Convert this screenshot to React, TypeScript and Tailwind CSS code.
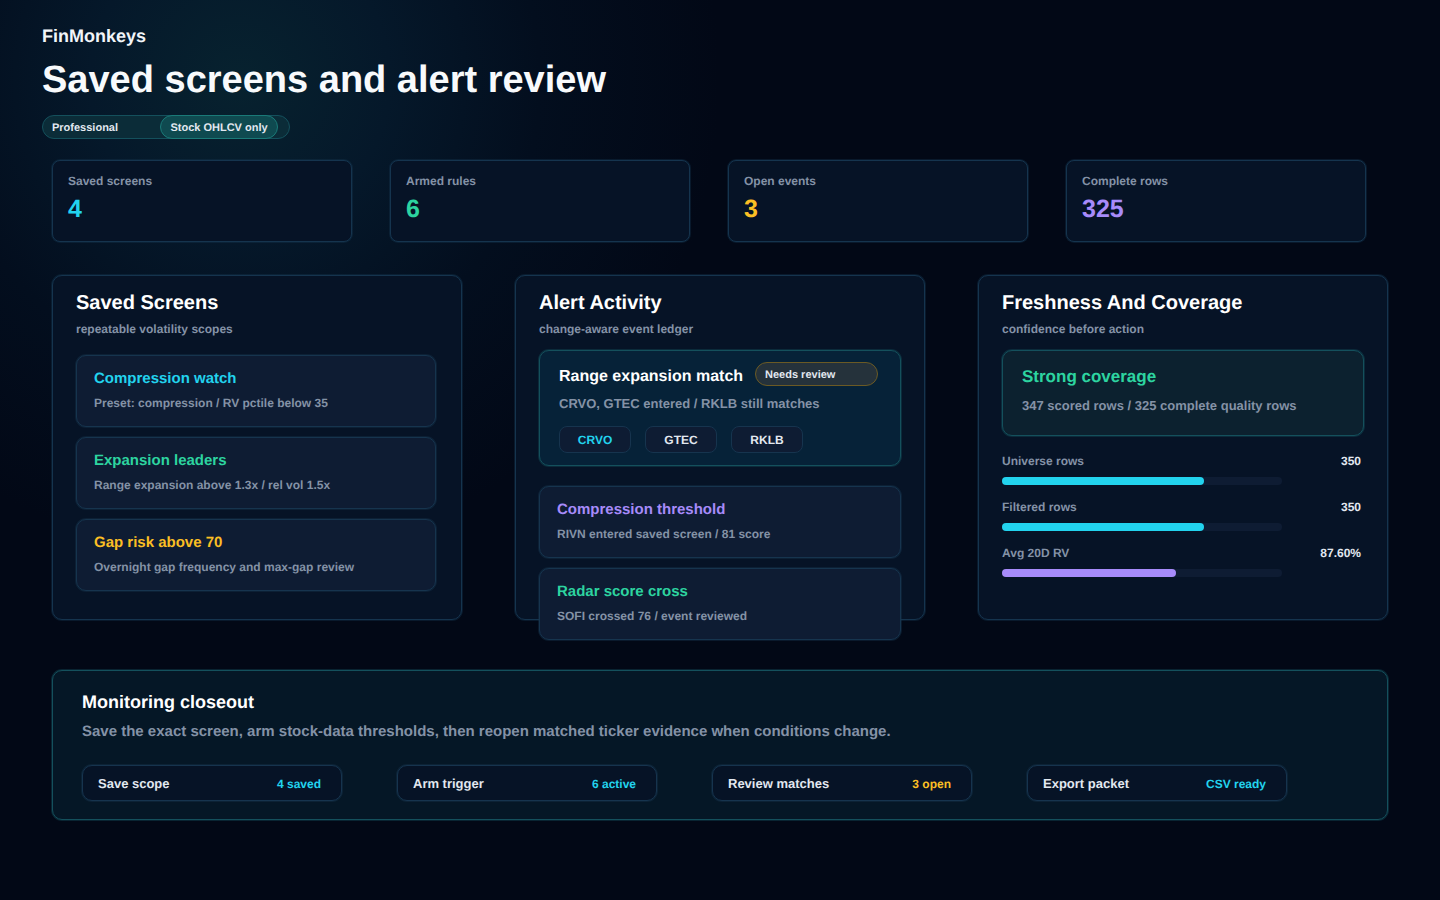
const stats = [
  { label: 'Saved screens', value: '4', color: 'text-[#22d3ee]' },
  { label: 'Armed rules', value: '6', color: 'text-[#2dd4a0]' },
  { label: 'Open events', value: '3', color: 'text-[#fbbf24]' },
  { label: 'Complete rows', value: '325', color: 'text-[#a78bfa]' },
]

const screens = [
  { title: 'Compression watch', text: 'Preset: compression / RV pctile below 35', color: 'text-[#22d3ee]' },
  { title: 'Expansion leaders', text: 'Range expansion above 1.3x / rel vol 1.5x', color: 'text-[#2dd4a0]' },
  { title: 'Gap risk above 70', text: 'Overnight gap frequency and max-gap review', color: 'text-[#fbbf24]' },
]

const alerts = [
  { title: 'Compression threshold', text: 'RIVN entered saved screen / 81 score', color: 'text-[#a78bfa]' },
  { title: 'Radar score cross', text: 'SOFI crossed 76 / event reviewed', color: 'text-[#2dd4a0]' },
]

const rows = [
  { label: 'Universe rows', value: '350', width: 72, color: 'bg-[#22d3ee]' },
  { label: 'Filtered rows', value: '350', width: 72, color: 'bg-[#22d3ee]' },
  { label: 'Avg 20D RV', value: '87.60%', width: 62, color: 'bg-[#a78bfa]' },
]

const closeout = [
  { label: 'Save scope', value: '4 saved', color: 'text-[#22d3ee]' },
  { label: 'Arm trigger', value: '6 active', color: 'text-[#22d3ee]' },
  { label: 'Review matches', value: '3 open', color: 'text-[#fbbf24]' },
  { label: 'Export packet', value: 'CSV ready', color: 'text-[#22d3ee]' },
]

function ListItem({ title, text, color }: { title: string; text: string; color: string }) {
  return (
    <div className="h-[72px] rounded-[10px] border border-[#16344e] bg-[#0e1c33] px-[17px] pt-[14px] ring-1 ring-[#16344e]/40">
      <div className={`text-[15px] leading-[18px] font-bold ${color}`}>{title}</div>
      <div className="mt-[7px] text-[12px] leading-[16px] font-bold text-[#8492a6]">{text}</div>
    </div>
  )
}

function Panel({ title, subtitle, children }: { title: string; subtitle: string; children: React.ReactNode }) {
  return (
    <div className="h-[345px] rounded-[10px] border border-[#15344e] bg-[#061326] px-[23px] pt-[15px] ring-1 ring-[#15344e]/40">
      <div className="text-[20px] leading-[24px] font-bold text-white">{title}</div>
      <div className="mt-[6px] text-[12px] leading-[16px] font-bold text-[#8492a6]">{subtitle}</div>
      {children}
    </div>
  )
}

export default function App() {
  return (
    <div
      className="min-h-[900px] bg-[#020816] bg-[radial-gradient(circle_at_240px_80px,#07222f_0%,#05182a_150px,#030e1e_300px,#020816_480px)] pt-[25px] pl-[42px] text-white [text-rendering:geometricPrecision]"
      style={{ fontFamily: '"Liberation Sans", Arial, sans-serif' }}
    >
      <div className="text-[18px] leading-[22px] font-bold text-[#f1f5f9]">FinMonkeys</div>
      <h1 className="mt-[10px] text-[38px] leading-[46px] font-bold text-[#f8fafc]">
        Saved screens and alert review
      </h1>
      <div className="mt-[12px] flex h-[24px] w-[248px] items-center rounded-full border border-[#14505c] bg-[#0b2c38]">
        <span className="w-[117px] pt-[2px] pl-[9px] text-[11px] font-bold text-[#e2e8f0]">Professional</span>
        <span className="flex h-[24px] w-[118px] items-center justify-center rounded-full border border-[#1a7a78] bg-[#0f4a50] pt-[2px] text-[11px] font-bold text-[#e2e8f0]">
          Stock OHLCV only
        </span>
      </div>

      <div className="mt-[21px] ml-[10px] flex gap-[38px]">
        {stats.map((s) => (
          <div key={s.label} className="h-[82px] w-[300px] rounded-[8px] border border-[#15344e] bg-[#061326] px-[15px] pt-[12px] ring-1 ring-[#15344e]/40">
            <div className="text-[12px] leading-[16px] font-bold text-[#8492a6]">{s.label}</div>
            <div className={`mt-[5px] text-[25px] leading-[30px] font-bold ${s.color}`}>{s.value}</div>
          </div>
        ))}
      </div>

      <div className="mt-[33px] ml-[10px] grid w-[1336px] grid-cols-3 gap-[53px]">
        <Panel title="Saved Screens" subtitle="repeatable volatility scopes">
          <div className="mt-[18px] flex w-[360px] flex-col gap-[10px]">
            {screens.map((s) => (
              <ListItem key={s.title} {...s} />
            ))}
          </div>
        </Panel>

        <Panel title="Alert Activity" subtitle="change-aware event ledger">
          <div className="mt-[13px] h-[116px] rounded-[10px] border border-[#14505c] bg-[#062238] px-[19px] pt-[11px] ring-1 ring-[#14505c]/40">
            <div className="flex items-start gap-[12px]">
              <span className="mt-[5px] text-[16px] leading-[20px] font-bold whitespace-nowrap text-white">Range expansion match</span>
              <span className="h-[24px] w-[123px] shrink-0 rounded-full border border-[#6b5a24] bg-[#25323b] pl-[9px] text-[11px] leading-[24px] font-bold text-[#e2e8f0]">
                Needs review
              </span>
            </div>
            <div className="mt-[8px] text-[13px] leading-[18px] font-bold text-[#8492a6]">
              CRVO, GTEC entered / RKLB still matches
            </div>
            <div className="mt-[13px] flex gap-[14px]">
              {['CRVO', 'GTEC', 'RKLB'].map((t, i) => (
                <span
                  key={t}
                  className={`flex h-[27px] w-[72px] items-center justify-center rounded-[8px] border border-[#16344e] bg-[#0e1c33] pt-[1px] text-[12px] font-bold ${i === 0 ? 'text-[#22d3ee]' : 'text-[#e2e8f0]'}`}
                >
                  {t}
                </span>
              ))}
            </div>
          </div>
          <div className="mt-[20px] flex flex-col gap-[10px]">
            {alerts.map((s) => (
              <ListItem key={s.title} {...s} />
            ))}
          </div>
        </Panel>

        <Panel title="Freshness And Coverage" subtitle="confidence before action">
          <div className="mt-[13px] h-[86px] rounded-[10px] border border-[#14505c] bg-[#0c212f] px-[19px] pt-[15px] ring-1 ring-[#14505c]/40">
            <div className="text-[17px] leading-[22px] font-bold text-[#2dd4a0]">Strong coverage</div>
            <div className="mt-[9px] text-[13px] leading-[18px] font-bold text-[#8492a6]">
              347 scored rows / 325 complete quality rows
            </div>
          </div>
          <div className="mt-[17px] flex flex-col gap-[14px]">
            {rows.map((r) => (
              <div key={r.label}>
                <div className="flex h-[16px] items-center justify-between pr-[3px] text-[12px] font-bold">
                  <span className="text-[#8492a6]">{r.label}</span>
                  <span className="text-[#e2e8f0]">{r.value}</span>
                </div>
                <div className="mt-[8px] h-[8px] w-[280px] rounded-full bg-[#0e1c33]">
                  <div className={`h-full rounded-full ${r.color}`} style={{ width: `${r.width}%` }} />
                </div>
              </div>
            ))}
          </div>
        </Panel>
      </div>

      <div className="mt-[50px] ml-[10px] h-[150px] w-[1336px] rounded-[10px] border border-[#14505c] bg-[#051726] px-[29px] pt-[20px] ring-1 ring-[#14505c]/40">
        <div className="text-[18px] leading-[22px] font-bold text-white">Monitoring closeout</div>
        <div className="mt-[9px] text-[15px] leading-[20px] font-bold text-[#8492a6]">
          Save the exact screen, arm stock-data thresholds, then reopen matched ticker evidence when conditions change.
        </div>
        <div className="mt-[23px] flex gap-[55px]">
          {closeout.map((c) => (
            <div key={c.label} className="flex h-[36px] w-[260px] items-center justify-between rounded-[10px] border border-[#16344e] bg-[#061326] pt-[2px] pr-[20px] pl-[15px] text-[13px] font-bold ring-1 ring-[#16344e]/40">
              <span className="text-[#e2e8f0]">{c.label}</span>
              <span className={`text-[12px] ${c.color}`}>{c.value}</span>
            </div>
          ))}
        </div>
      </div>
    </div>
  )
}
